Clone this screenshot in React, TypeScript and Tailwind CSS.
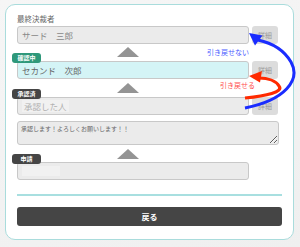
import React from "react";

const jp = "font-['Noto_Sans_CJK_JP','Noto_Sans',sans-serif]";

function Badge({ label, color }: { label: string; color: string }) {
    return (
        <span
            className={`absolute left-[-5px] bottom-[-2px] z-10 flex h-[10px] w-[29px] items-center justify-center rounded-[3px] text-[6px] font-bold leading-none text-white ${color}`}
        >
            {label}
        </span>
    );
}

function Triangle({ top }: { top: string }) {
    return (
        <div
            className={`${top} ml-[100px] h-0 w-0 border-l-[11px] border-r-[11px] border-b-[10px] border-l-transparent border-r-transparent border-b-[#949494]`}
        />
    );
}

function NameRow({ children, cyan }: { children?: React.ReactNode; cyan?: boolean }) {
    return (
        <div className="flex gap-[3px]">
            <div
                className={`flex h-[18px] w-[232px] items-center rounded-[3px] border border-[#c8c8c8] px-[4px] text-[8.5px] ${
                    cyan ? "bg-[#d4f4f6] text-[#666]" : "bg-[#ebebeb] text-[#888]"
                }`}
            >
                {children}
            </div>
            <div className="flex h-[18px] w-[26px] items-center justify-center rounded-[3px] bg-[#dcdcdc] text-[7px] text-[#9a9a9a]">
                詳細
            </div>
        </div>
    );
}

export default function App() {
    return (
        <div className={`h-[247px] w-[300px] bg-[linear-gradient(160deg,#f6f6f6,#efefef)] pl-[5px] pt-[4px] ${jp}`}>
            <div className="relative w-[289px] rounded-[10px] border border-[#a9dcdc] bg-white px-[11px] pt-[9px] pb-[13px]">
                <div className="mb-[2px] h-[10px] text-[7.5px] leading-[10px] text-[#666]">最終決裁者</div>
                <NameRow>サード　三郎</NameRow>

                <div className="relative flex h-[17px] w-[232px]">
                    <Triangle top="mt-[3px]" />
                    <span className="ml-auto mt-[4px] text-[7px] leading-[9px] text-[#4a5cff]">引き戻せない</span>
                    <Badge label="確認中" color="bg-[#2e987a]" />
                </div>
                <NameRow cyan>セカンド　次郎</NameRow>

                <div className="relative flex h-[18px] w-[232px]">
                    <Triangle top="mt-[4px]" />
                    <span className="ml-auto mr-[-6px] mt-[2px] text-[7px] leading-[9px] text-[#ff4d4d]">引き戻せる</span>
                    <Badge label="承認済" color="bg-[#454545]" />
                </div>
                <NameRow>
                    <span className="bg-[#f1f1f1] px-[2px] text-[#b0b0b0]">承認した人</span>
                </NameRow>

                <textarea
                    readOnly
                    defaultValue="承認します！よろしくお願いします！！"
                    className="mt-[6px] block h-[24px] w-[262px] rounded-[3px] border border-[#c8c8c8] bg-[#ebebeb] px-[3px] py-[2px] text-[6px] leading-[9px] text-[#666] outline-none"
                />

                <div className="relative flex h-[17px] w-[232px]">
                    <Triangle top="mt-[4px]" />
                    <Badge label="申請" color="bg-[#454545]" />
                </div>
                <div className="flex h-[18px] w-[232px] items-center rounded-[3px] border border-[#c8c8c8] bg-[#ebebeb] px-[4px]">
                    <span className="h-[10px] w-[38px] bg-[#f1f1f1]" />
                </div>

                <div className="mt-[14px] h-[2px] w-full bg-[#a8dfe0]" />

                <button className="mt-[11px] flex h-[19px] w-full items-center justify-center rounded-[3px] bg-[#454545] text-[8px] font-bold text-white">
                    戻る
                </button>
            </div>

            <svg className="pointer-events-none absolute left-0 top-0" width="300" height="247" viewBox="0 0 300 247">
                <path
                    d="M245 108 C285 100 301 80 291 62 C284 50 272 43 258 40"
                    fill="none"
                    stroke="#1a2cff"
                    strokeWidth="3"
                />
                <polygon points="249,33 262.5,35.5 255,45.5" fill="#1a2cff" />
                <path
                    d="M245 98 C266 96 284 92 279 86 C276 81 268 78 259 78"
                    fill="none"
                    stroke="#ff2a00"
                    strokeWidth="3.2"
                />
                <polygon points="249,76 262,71 260,82.5" fill="#ff2a00" />
            </svg>
        </div>
    );
}
